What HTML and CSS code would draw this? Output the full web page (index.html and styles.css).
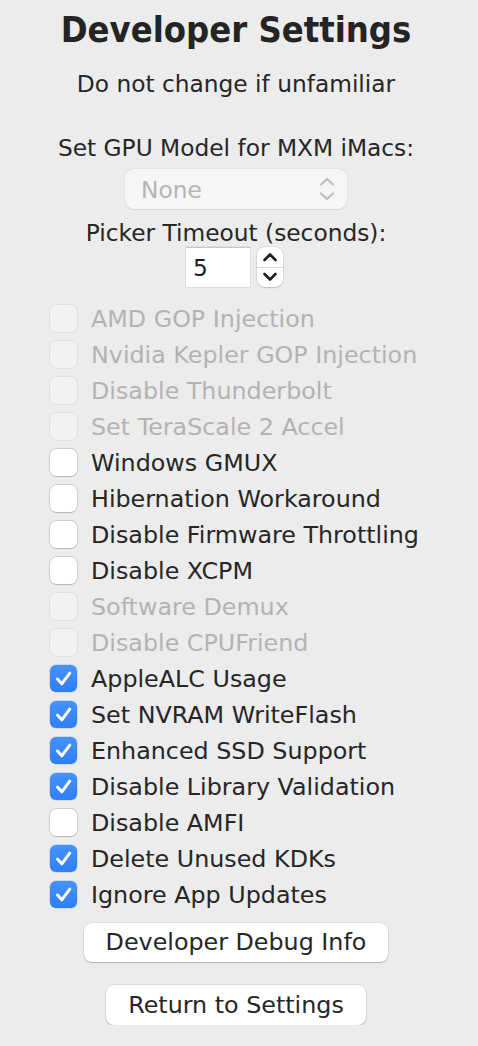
FILE: index.html
```html
<!DOCTYPE html>
<html>
<head>
<meta charset="utf-8">
<link rel="stylesheet" href="styles.css">
</head>
<body>
<div class="panel">
  <h1 class="title">Developer Settings</h1>
  <p class="subtitle">Do not change if unfamiliar</p>
  <p class="label label-gpu">Set GPU Model for MXM iMacs:</p>
  <div class="popup">
    <span class="popup-text">None</span>
    <svg class="popup-arrows" width="16" height="24" viewBox="0 0 16 24"><path d="M2 7.5 L8 2 L14 7.5" fill="none" stroke="#bdbdbd" stroke-width="2.2" stroke-linecap="round" stroke-linejoin="round"/><path d="M2 16.5 L8 22 L14 16.5" fill="none" stroke="#bdbdbd" stroke-width="2.2" stroke-linecap="round" stroke-linejoin="round"/></svg>
  </div>
  <p class="label label-picker">Picker Timeout (seconds):</p>
  <div class="stepper-row">
    <div class="field">5</div>
    <div class="stepper">
      <div class="step step-up"><svg width="16" height="10" viewBox="0 0 16 10"><path d="M2.5 8 L8 2.5 L13.5 8" fill="none" stroke="#1e1e1e" stroke-width="2.6" stroke-linecap="round" stroke-linejoin="round"/></svg></div>
      <div class="step step-down"><svg width="16" height="10" viewBox="0 0 16 10"><path d="M2.5 2 L8 7.5 L13.5 2" fill="none" stroke="#1e1e1e" stroke-width="2.6" stroke-linecap="round" stroke-linejoin="round"/></svg></div>
    </div>
  </div>
  <div class="checks">
    <div class="row disabled"><span class="box"></span><span class="txt">AMD GOP Injection</span></div>
    <div class="row disabled"><span class="box"></span><span class="txt">Nvidia Kepler GOP Injection</span></div>
    <div class="row disabled"><span class="box"></span><span class="txt">Disable Thunderbolt</span></div>
    <div class="row disabled"><span class="box"></span><span class="txt">Set TeraScale 2 Accel</span></div>
    <div class="row"><span class="box"></span><span class="txt">Windows GMUX</span></div>
    <div class="row"><span class="box"></span><span class="txt">Hibernation Workaround</span></div>
    <div class="row"><span class="box"></span><span class="txt">Disable Firmware Throttling</span></div>
    <div class="row"><span class="box"></span><span class="txt">Disable XCPM</span></div>
    <div class="row disabled"><span class="box"></span><span class="txt">Software Demux</span></div>
    <div class="row disabled"><span class="box"></span><span class="txt">Disable CPUFriend</span></div>
    <div class="row checked"><span class="box"><svg width="27" height="27" viewBox="0 0 27 27"><path d="M7.5 14 L11.8 18.8 L19.8 8.2" fill="none" stroke="#fff" stroke-width="3" stroke-linecap="round" stroke-linejoin="round"/></svg></span><span class="txt">AppleALC Usage</span></div>
    <div class="row checked"><span class="box"><svg width="27" height="27" viewBox="0 0 27 27"><path d="M7.5 14 L11.8 18.8 L19.8 8.2" fill="none" stroke="#fff" stroke-width="3" stroke-linecap="round" stroke-linejoin="round"/></svg></span><span class="txt">Set NVRAM WriteFlash</span></div>
    <div class="row checked"><span class="box"><svg width="27" height="27" viewBox="0 0 27 27"><path d="M7.5 14 L11.8 18.8 L19.8 8.2" fill="none" stroke="#fff" stroke-width="3" stroke-linecap="round" stroke-linejoin="round"/></svg></span><span class="txt">Enhanced SSD Support</span></div>
    <div class="row checked"><span class="box"><svg width="27" height="27" viewBox="0 0 27 27"><path d="M7.5 14 L11.8 18.8 L19.8 8.2" fill="none" stroke="#fff" stroke-width="3" stroke-linecap="round" stroke-linejoin="round"/></svg></span><span class="txt">Disable Library Validation</span></div>
    <div class="row"><span class="box"></span><span class="txt">Disable AMFI</span></div>
    <div class="row checked"><span class="box"><svg width="27" height="27" viewBox="0 0 27 27"><path d="M7.5 14 L11.8 18.8 L19.8 8.2" fill="none" stroke="#fff" stroke-width="3" stroke-linecap="round" stroke-linejoin="round"/></svg></span><span class="txt">Delete Unused KDKs</span></div>
    <div class="row checked"><span class="box"><svg width="27" height="27" viewBox="0 0 27 27"><path d="M7.5 14 L11.8 18.8 L19.8 8.2" fill="none" stroke="#fff" stroke-width="3" stroke-linecap="round" stroke-linejoin="round"/></svg></span><span class="txt">Ignore App Updates</span></div>
  </div>
  <div class="btn btn-debug">Developer Debug Info</div>
  <div class="btn btn-return">Return to Settings</div>
</div>
</body>
</html>
```
FILE: styles.css
```css
html, body {
  margin: 0;
  padding: 0;
  background: #ececec;
}
body {
  font-family: "DejaVu Sans", "Liberation Sans", sans-serif;
  color: #262626;
  font-size: 23.3px;
}
.panel {
  width: 472px;
  display: flex;
  flex-direction: column;
  align-items: center;
  padding-top: 10px;
}
.title {
  margin: 0;
  font-family: "DejaVu Sans Condensed", "DejaVu Sans", sans-serif;
  font-stretch: condensed;
  font-weight: bold;
  font-size: 36px;
  line-height: 40px;
  color: #242424;
}
.subtitle {
  margin: 20px 0 0;
  line-height: 28px;
}
.label {
  margin: 0;
  line-height: 28px;
}
.label-gpu {
  margin-top: 36px;
}
.popup {
  margin-top: 7px;
  width: 222px;
  height: 40px;
  box-sizing: border-box;
  border-radius: 9px;
  background: #f6f6f6;
  box-shadow: 0 0 0 0.5px rgba(0,0,0,0.06), 0 1px 1.5px rgba(0,0,0,0.06);
  display: flex;
  align-items: center;
  justify-content: space-between;
  padding: 0 12px 0 16px;
}
.popup-text {
  color: #b5b5b5;
  line-height: 28px;
  padding-top: 1px;
}
.label-picker {
  margin-top: 10px;
}
.stepper-row {
  display: flex;
  gap: 7px;
  margin-left: -3px;
}
.field {
  width: 64px;
  height: 40px;
  box-sizing: border-box;
  background: #fff;
  border-top: 1px solid #c9c9c9;
  box-shadow: 0 0 0 0.5px rgba(0,0,0,0.12);
  padding-left: 7px;
  line-height: 39px;
  color: #1e1e1e;
}
.stepper {
  width: 26px;
  height: 40px;
  border-radius: 8px;
  background: #fff;
  box-shadow: 0 0 0 0.5px rgba(0,0,0,0.12), 0 1px 1.5px rgba(0,0,0,0.15);
  display: flex;
  flex-direction: column;
  overflow: hidden;
}
.step {
  flex: 1;
  display: flex;
  align-items: center;
  justify-content: center;
}
.step-up {
  border-bottom: 1px solid #dcdcdc;
}
.step svg { display: block; }
.checks {
  align-self: flex-start;
  margin-top: 13px;
  padding-left: 50px;
  display: flex;
  flex-direction: column;
}
.row {
  height: 36px;
  display: flex;
  align-items: center;
  gap: 14px;
}
.box {
  width: 27px;
  height: 27px;
  box-sizing: border-box;
  border-radius: 6px;
  background: #fff;
  box-shadow: 0 0 0 0.5px rgba(0,0,0,0.22), 0 0.5px 1px rgba(0,0,0,0.12);
  flex: none;
}
.box svg { display: block; }
.txt {
  font-size: 23.8px;
  line-height: 28px;
  padding-top: 2px;
  white-space: nowrap;
}
.disabled .box {
  background: #f2f2f2;
  box-shadow: 0 0 0 0.5px rgba(0,0,0,0.1);
}
.disabled .txt {
  color: #b3b3b3;
}
.checked .box {
  background: linear-gradient(#4593fb, #2f7ef6);
  box-shadow: 0 0 0 0.5px rgba(0,60,200,0.25);
}
.btn {
  font-size: 23.8px;
  background: #fff;
  border-radius: 8px;
  box-shadow: 0 0 0 0.5px rgba(0,0,0,0.12), 0 1px 1.5px rgba(0,0,0,0.2);
  text-align: center;
  line-height: 39px;
  height: 39px;
  color: #262626;
}
.btn-debug {
  margin-top: 11px;
  width: 304px;
}
.btn-return {
  margin-top: 23px;
  width: 260px;
  height: 40px;
  line-height: 40px;
}
```
